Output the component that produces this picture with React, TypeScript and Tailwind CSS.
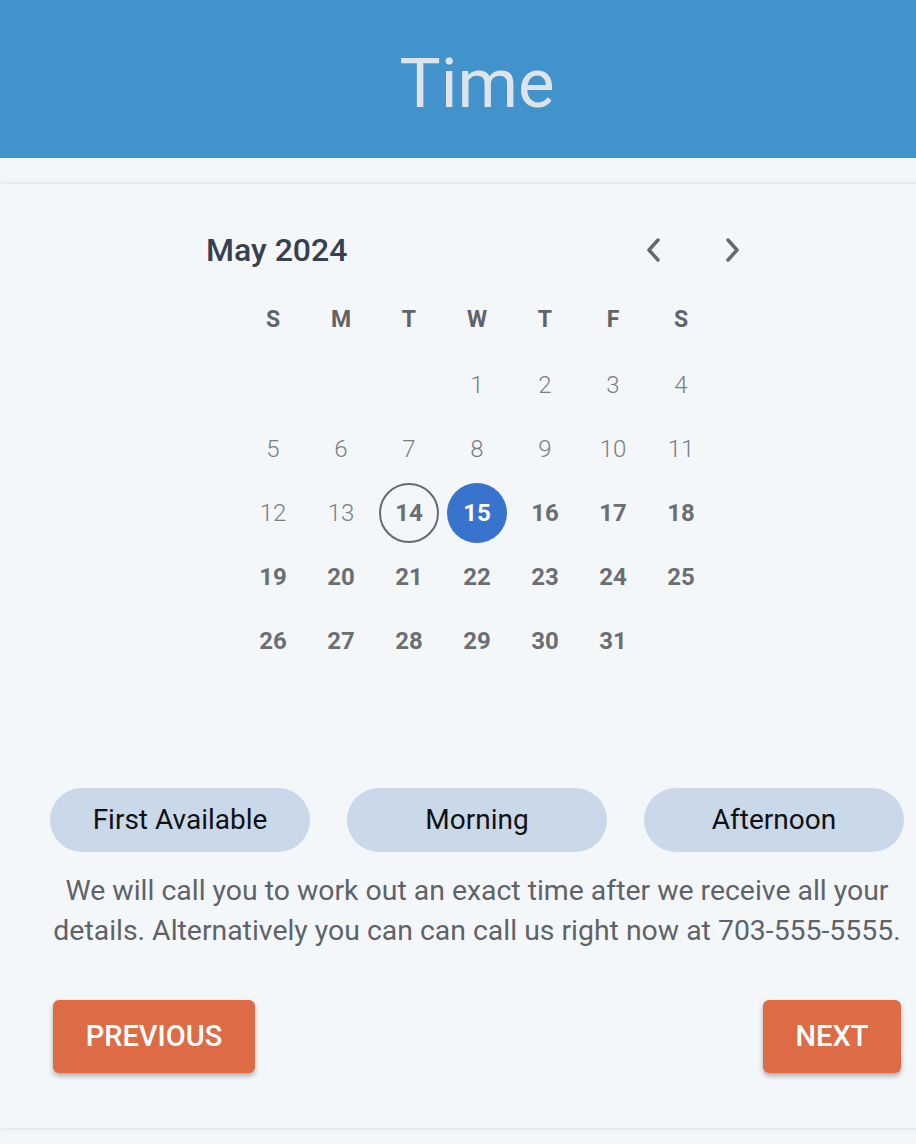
import React, { useState } from 'react';

// Days of May 2024: starts on Wednesday
const weekDays = ['S', 'M', 'T', 'W', 'T', 'F', 'S'];
const LEAD = 3;
const TODAY = 14;

const ChevronLeft: React.FC = () => (
  <svg width="16" height="26" viewBox="0 0 16 26" fill="none">
    <path d="M13 3 L4 13 L13 23" stroke="#666a70" strokeWidth="3.5" strokeLinecap="round" strokeLinejoin="round" />
  </svg>
);

const ChevronRight: React.FC = () => (
  <svg width="16" height="26" viewBox="0 0 16 26" fill="none">
    <path d="M3 3 L12 13 L3 23" stroke="#666a70" strokeWidth="3.5" strokeLinecap="round" strokeLinejoin="round" />
  </svg>
);

const App: React.FC = () => {
  const [selected, setSelected] = useState(15);
  const cells: (number | null)[] = [
    ...Array.from({ length: LEAD }, () => null),
    ...Array.from({ length: 31 }, (_, i) => i + 1),
  ];

  return (
    <div className="w-full min-h-[1144px] overflow-hidden bg-[#f4f7fa]" style={{ fontFamily: 'Roboto, sans-serif' }}>
      <div className="w-[954px]">
        {/* Header */}
        <header className="h-[158px] bg-[#4292cc] flex items-center justify-center pt-[8px]">
          <h1 className="text-[69px] font-normal text-[#dde3e9] leading-none">Time</h1>
        </header>

        <div className="h-[26px]" />

        {/* Card */}
        <section className="bg-[#f4f7fa] shadow-[0_0_6px_rgba(0,0,0,0.12)] pb-[55px]">
          {/* Calendar */}
          <div className="pt-[46px] flex flex-col items-center">
            <div className="w-[574px] flex items-center justify-between pl-[16px] pr-[23px] h-[40px]">
              <span className="text-[32px] font-medium text-[#36404f]">May 2024</span>
              <div className="flex items-center gap-[64px]">
                <button className="w-[16px]"><ChevronLeft /></button>
                <button className="w-[16px]"><ChevronRight /></button>
              </div>
            </div>

            <div className="grid grid-cols-7 w-[476px] mt-[30px]">
              {weekDays.map((d, i) => (
                <div key={i} className="h-[40px] flex items-center justify-center text-[23px] font-bold text-[#606368]">
                  {d}
                </div>
              ))}
            </div>

            <div className="grid grid-cols-7 w-[476px] mt-[13px]">
              {cells.map((d, i) => {
                if (d === null) return <div key={i} className="h-[64px]" />;
                const past = d < TODAY;
                const isToday = d === TODAY;
                const isSel = d === selected;
                let cls = 'w-[60px] h-[60px] rounded-full flex items-center justify-center text-[24px] ';
                if (isSel) cls += 'bg-[#3874cb] text-white font-bold';
                else if (isToday) cls += 'border-[2px] border-[#666a70] text-[#6b6e72] font-bold';
                else if (past) cls += 'text-[#7b7e82] font-light';
                else cls += 'text-[#6b6e72] font-bold';
                return (
                  <div key={i} className="h-[64px] flex items-center justify-center">
                    <button className={cls} onClick={() => !past && setSelected(d)}>{d}</button>
                  </div>
                );
              })}
            </div>
          </div>

          {/* Time slots */}
          <div className="pl-[50px] pr-[50px] mt-[115px]">
            <div className="flex justify-between">
              {['First Available', 'Morning', 'Afternoon'].map((t) => (
                <button key={t} className="w-[260px] h-[64px] rounded-full bg-[#c9d9ea] text-[28px] text-[#111111]">
                  {t}
                </button>
              ))}
            </div>
            <p className="mt-[19px] -mx-[5px] text-center text-[28.4px] leading-[40px] text-[#5f6368]">
              We will call you to work out an exact time after we receive all your details. Alternatively you can can call us right now at 703-555-5555.
            </p>

            <div className="flex justify-between mt-[49px] pl-[3px] pr-[3px]">
              <button className="w-[202px] h-[73px] rounded-md bg-[#dd6c46] text-white text-[29px] font-medium uppercase shadow-[0_3px_5px_rgba(0,0,0,0.3)]">
                Previous
              </button>
              <button className="w-[138px] h-[73px] rounded-md bg-[#dd6c46] text-white text-[29px] font-medium uppercase shadow-[0_3px_5px_rgba(0,0,0,0.3)]">
                Next
              </button>
            </div>
          </div>
        </section>
      </div>
    </div>
  );
};

export default App;
